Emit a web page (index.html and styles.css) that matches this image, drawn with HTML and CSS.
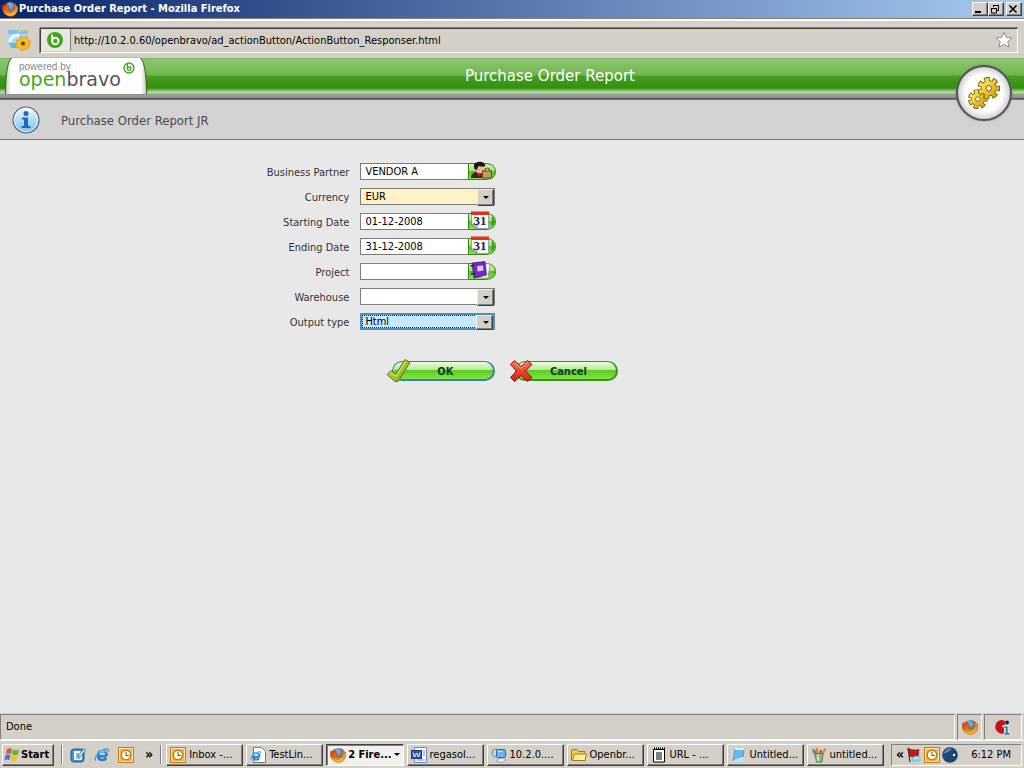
FILE: index.html
```html
<!DOCTYPE html>
<html lang="en">
<head>
  <meta charset="UTF-8" />
  <meta name="viewport" content="width=device-width, initial-scale=1.0"/>
  <title>Purchase Order Report</title>
  <link rel="stylesheet" href="styles.css">
</head>
<body>
  <!-- shared icons -->
  <svg class="defs" aria-hidden="true">
    <defs>
      <linearGradient id="fox" x1="0" y1="0" x2="1" y2="1">
        <stop offset="0" stop-color="#b8330c"/><stop offset=".5" stop-color="#ee7a13"/><stop offset="1" stop-color="#ffc62e"/>
      </linearGradient>
      <radialGradient id="globe" cx=".4" cy=".3" r=".8">
        <stop offset="0" stop-color="#8fc8ef"/><stop offset="1" stop-color="#12327e"/>
      </radialGradient>
      <linearGradient id="gold" x1="0" y1="0" x2="1" y2="1">
        <stop offset="0" stop-color="#ffec5c"/><stop offset="1" stop-color="#d8a00c"/>
      </linearGradient>
      <linearGradient id="pill" x1="0" y1="0" x2="0" y2="1">
        <stop offset="0" stop-color="#d9f7bd"/><stop offset=".45" stop-color="#9be66a"/><stop offset=".5" stop-color="#55bf24"/><stop offset="1" stop-color="#86ea4a"/>
      </linearGradient>
      <linearGradient id="info" x1="0" y1="0" x2="0" y2="1">
        <stop offset="0" stop-color="#f4fbff"/><stop offset=".5" stop-color="#b2dcf8"/><stop offset="1" stop-color="#7dc0f0"/>
      </linearGradient>
      <linearGradient id="check" x1="0" y1="0" x2="1" y2="1">
        <stop offset="0" stop-color="#cbe34e"/><stop offset="1" stop-color="#7ea51c"/>
      </linearGradient>
      <linearGradient id="cross" x1="0" y1="0" x2="0" y2="1">
        <stop offset="0" stop-color="#ff7354"/><stop offset="1" stop-color="#d21f12"/>
      </linearGradient>
    </defs>
    <symbol id="firefox" viewBox="0 0 16 16">
      <circle cx="8.5" cy="7.5" r="6.5" fill="url(#globe)"/>
      <path d="M1 3.5 2 5Q3 2.500 5 2.200L4.600 3.800Q6.500 4 7.600 5.200 6 5.600 6 6.800 7 7.200 8.500 7 7.600 8.600 5.900 8.800 7 11 9.600 10.600 12 10 12.200 7.400L13 8Q13 4 10.500 2 14 2.600 15.200 6L15.800 5Q16.500 11 12.800 13.900 8.500 17 4 14 .2 11.500.3 7Q.3 5 1 3.500Z" fill="url(#fox)" stroke="#a53a08" stroke-width=".4"/>
      <path d="M2.500 11.500Q7 16 12.500 12.300" fill="none" stroke="#ffc83a" stroke-width="1"/>
    </symbol>
    <symbol id="outlook" viewBox="0 0 16 16">
      <rect x=".5" y=".5" width="15" height="15" fill="#fde7b0" stroke="#c8791a"/>
      <rect x="2" y="2" width="12" height="12" fill="#f3b64d"/>
      <circle cx="8" cy="8" r="4.800" fill="#fff8e4" stroke="#c36d0b" stroke-width="1.200"/>
      <path d="M8 4.500V8.500H11" fill="none" stroke="#7c4b0c"/>
    </symbol>
    <symbol id="ie" viewBox="0 0 16 16">
      <path d="M12.500 9.200H5.200M12.700 9Q12.700 4.200 8.500 4 4.200 4.200 4 8.600 4.300 13 8.500 13 11 13 12.200 11" fill="none" stroke="#2381d5" stroke-width="2.600"/>
      <path d="M2 13.500Q-.5 12 4 6.800 9 2 13 2 15.500 2.200 14 5" fill="none" stroke="#3aa0ea" stroke-width="1.300"/>
      <path d="M5 5.500Q8 2.500 11.500 5" fill="none" stroke="#a5dcfb"/>
    </symbol>
    <symbol id="bravo" viewBox="0 0 16 16">
      <circle cx="8" cy="8" r="8" fill="#43a518"/>
      <circle cx="8.300" cy="9" r="3.200" fill="none" stroke="#fff" stroke-width="2"/>
      <path d="M5.100 2.600V9.500" stroke="#fff" stroke-width="2"/>
    </symbol>
    <symbol id="calendar" viewBox="0 0 28 20">
      <path d="M.5 2.500H18Q27.500 3 27.500 10.500T18 18.500H.5Z" fill="url(#pill)" stroke="#2f8a14"/>
      <path d="M24 6Q26.500 10 24 14" fill="none" stroke="#1f8a10" stroke-width="1.500"/>
      <path d="M3.500 1H20.500V17.500H9L3.500 13Z" fill="#fcfcff" stroke="#9d9db2"/>
      <path d="M3 13 9 17.500 9 13.500Z" fill="#bcbccd" stroke="#77778c" stroke-width=".7"/>
      <rect x="3" y="0" width="18" height="4" fill="#d8371d"/>
      <path d="M3 .5H21" stroke="#f28a67"/>
    </symbol>
    <symbol id="gear" viewBox="0 0 24 24">
      <circle cx="12" cy="12" r="9" fill="none" stroke="#75570a" stroke-width="6" stroke-dasharray="5.400 2.678" stroke-dashoffset="2.700"/>
      <circle cx="12" cy="12" r="8.600" fill="#75570a"/>
      <circle cx="12" cy="12" r="8.500" fill="none" stroke="url(#gold)" stroke-width="5" stroke-dasharray="3.600 4.029" stroke-dashoffset="1.800"/>
      <circle cx="12" cy="12" r="7.700" fill="url(#gold)"/>
      <circle cx="12" cy="12" r="2.800" fill="#f5f5f5" stroke="#75570a"/>
    </symbol>
  </svg>

  <div class="titlebar">
    <svg class="icon"><use href="#firefox"/></svg>
    <span class="caption">Purchase Order Report - Mozilla Firefox</span>
    <div class="window-buttons">
      <button type="button" aria-label="Minimize"><svg viewBox="0 0 12 10"><path d="M2 8H8" stroke="#000" stroke-width="2"/></svg></button>
      <button type="button" aria-label="Restore"><svg viewBox="0 0 12 10"><path d="M4.500 3V1.500H9.500V6.500H8M4 1.500H10M2.500 4.500H7.500V9H2.500ZM2 4.500H8" fill="none" stroke="#000"/></svg></button>
      <button type="button" class="close" aria-label="Close"><svg viewBox="0 0 12 10"><path d="M2.500 1.500 9.500 8.500M9.500 1.500 2.500 8.500" stroke="#000" stroke-width="1.600"/></svg></button>
    </div>
  </div>

  <div class="toolbar">
    <svg class="prism" viewBox="0 0 24 24">
      <rect x="1" y="2" width="20" height="15" rx="2" fill="#a9d8f6"/>
      <rect x="1" y="2" width="20" height="4" rx="1" fill="#7fc0ec"/>
      <path d="M12 3H14M16 3H17M19 3H20" stroke="#ffcf3a" stroke-width="2"/>
      <path d="M3 14Q3 8 12 7" stroke="#f3fbff" stroke-width="3" fill="none"/>
      <path d="M2 15H9V20H4Z" fill="#69b7e9"/>
      <path d="M14 8 17 10 20 8 21 12 24 13 22 17 22 20 18 21 15 23 12 20 8 19 10 15 9 12 13 12Z" fill="#f6bd20" stroke="#d8910c" stroke-width=".7"/>
      <circle cx="16" cy="15.500" r="2" fill="#614308"/>
    </svg>
    <div class="address">
      <span class="favicon"><svg><use href="#bravo"/></svg></span>
      <input type="text" aria-label="Address" value="http://10.2.0.60/openbravo/ad_actionButton/ActionButton_Responser.html">
      <svg class="star" viewBox="0 0 18 18"><path d="M9 1.500 11.300 6.300 16.700 7 12.800 10.600 13.800 16 9 13.400 4.200 16 5.200 10.600 1.300 7 6.700 6.300Z" fill="#fff" stroke="#8d8d8d"/></svg>
    </div>
  </div>

  <header class="app-header">
    <div class="logo">
      <span class="powered">powered by</span>
      <span class="brand"><span class="green">open</span>bravo</span>
      <svg class="mark" viewBox="0 0 12 12"><circle cx="6" cy="6" r="5" fill="none" stroke="#43a518" stroke-width="1.400"/><circle cx="6.200" cy="6.800" r="1.800" fill="none" stroke="#43a518" stroke-width="1.300"/><path d="M4.400 2V7" stroke="#43a518" stroke-width="1.300"/></svg>
    </div>
    <h1>Purchase Order Report</h1>
    <div class="process">
      <svg viewBox="0 0 36 36"><use href="#gear" x="1" y="14" width="21" height="21"/><use href="#gear" x="11" y="1" width="24" height="24"/></svg>
    </div>
  </header>

  <div class="info-bar">
    <svg viewBox="0 0 28 28">
      <circle cx="14" cy="14" r="13" fill="url(#info)" stroke="#54606c" stroke-width="1.200"/>
      <circle cx="14" cy="14" r="11.800" fill="none" stroke="#fff" stroke-opacity=".7"/>
      <circle cx="14" cy="7.500" r="2.500" fill="#1b6cb0"/>
      <path d="M10 11.500H16V20H18.500V22H9.500V20H12V13.500H10Z" fill="#1b6cb0"/>
    </svg>
    <h2>Purchase Order Report JR</h2>
  </div>

  <main>
    <form class="report-form">
      <label for="partner">Business Partner</label>
      <div class="field">
        <input type="text" id="partner" value="VENDOR A">
        <button type="button" class="picker" aria-label="Select business partner">
          <svg viewBox="0 0 28 20">
            <path d="M.5 2.500H18Q27.500 3 27.500 10.500T18 18.500H.5Z" fill="url(#pill)" stroke="#2f8a14"/>
            <path d="M3 17Q3 12 8 11H14Q17 12 17 17Z" fill="#4b2023"/>
            <circle cx="12" cy="8" r="4.500" fill="#efb994"/>
            <path d="M6.500 8Q4 2 10 1 16 0 17.500 5 15 6.500 11 5Q9.500 6 9 9Z" fill="#1d1512"/>
            <path d="M9 12 11.500 16 14 12" fill="#cf2222"/>
            <path d="M17 10V8.500Q19.500 5.500 21.500 8.500V10" fill="none" stroke="#6b4a23" stroke-width="1.200"/>
            <rect x="14.500" y="10" width="9" height="7" fill="#c69a5f" stroke="#6b4a23"/>
          </svg>
        </button>
      </div>

      <label for="currency">Currency</label>
      <div class="field select required">
        <select id="currency"><option>EUR</option></select>
      </div>

      <label for="from">Starting Date</label>
      <div class="field">
        <input type="text" id="from" value="01-12-2008">
        <button type="button" class="picker" aria-label="Pick starting date"><svg viewBox="0 0 28 20"><use href="#calendar"/><text x="12" y="14" class="cal-day">31</text></svg></button>
      </div>

      <label for="to">Ending Date</label>
      <div class="field">
        <input type="text" id="to" value="31-12-2008">
        <button type="button" class="picker" aria-label="Pick ending date"><svg viewBox="0 0 28 20"><use href="#calendar"/><text x="12" y="14" class="cal-day">31</text></svg></button>
      </div>

      <label for="project">Project</label>
      <div class="field">
        <input type="text" id="project">
        <button type="button" class="picker" aria-label="Select project">
          <svg viewBox="0 0 28 20">
            <path d="M.5 2.500H18Q27.500 3 27.500 10.500T18 18.500H.5Z" fill="url(#pill)" stroke="#2f8a14"/>
            <path d="M12 2 22 3 20 17 12 17Z" fill="#f8f5ff" stroke="#8f86a5" stroke-width=".7"/>
            <path d="M4 2 17 0.500 18.500 14 6 17Z" fill="#7428bc" stroke="#3d1273" stroke-width=".7"/>
            <path d="M9 5 15 4.500 15.500 9.500 9.500 10.500Z" fill="#dcc3f2"/>
            <path d="M2.500 5 6 4.500M3 13 7 12.500" stroke="#2b1647" stroke-width="1.500"/>
          </svg>
        </button>
      </div>

      <label for="warehouse">Warehouse</label>
      <div class="field select">
        <select id="warehouse"><option></option></select>
      </div>

      <label for="output">Output type</label>
      <div class="field select focused">
        <select id="output"><option>Html</option><option>PDF</option></select>
      </div>

      <div class="actions">
        <button type="submit" class="action ok">
          <svg viewBox="0 0 26 26"><path d="M1 16.500 5 12.500 9.500 16.500 19 1.500 24 4.500 12 23.500H9Z" fill="url(#check)" stroke="#5b7010" stroke-linejoin="round"/><path d="M5 14.500 10 18.500 19.500 3.500" fill="none" stroke="#dcee7c"/></svg>
          <span>OK</span>
        </button>
        <button type="button" class="action">
          <svg viewBox="0 0 26 26"><path d="M5.500 2.500 12 8.500 18.500 2.500 23 6.500 16.500 13 23 19.500 18.500 23.500 12 17.500 5.500 23.500 1.500 19.500 7.500 13 1.500 6.500Z" fill="url(#cross)" stroke="#831510" stroke-linejoin="round"/><path d="M5.500 4.500 12 10.500 18.500 4.500" fill="none" stroke="#ff9d84"/></svg>
          <span>Cancel</span>
        </button>
      </div>
    </form>
  </main>

  <div class="statusbar">
    <div class="panel message">Done</div>
    <div class="panel"><svg class="icon"><use href="#firefox"/></svg></div>
    <div class="panel wide">
      <svg class="icon" viewBox="0 0 16 16"><path d="M9.500 1.500Q5 0 2 3-1 7 1 11 4 15.500 9 14.500V8H7V6H10Z" fill="#c8101c"/><path d="M9 7H13V13.500H15V16H9V13.500H10.500V9.500H9Z" fill="#3c7ba5" stroke="#fff" stroke-width=".6"/><circle cx="12" cy="3.500" r="2" fill="#1c2732"/></svg>
    </div>
  </div>

  <footer class="taskbar">
    <button type="button" class="start">
      <svg viewBox="0 0 18 16"><path d="M4 2Q7 .5 9 2L8 7Q6 6 3 7Z" fill="#e5562c"/><path d="M10 2.500Q13 4 16 2.500L15 7.500Q12 9 9 7.500Z" fill="#5fb536"/><path d="M2.500 8Q5.500 7 7.500 8L6.500 13Q4 12 1.500 13Z" fill="#3d7be0"/><path d="M8.700 8.600Q11.500 10 14.600 8.700L13.600 13.600Q11 15 7.700 13.600Z" fill="#f4c11f"/></svg>
      Start
    </button>
    <span class="divider"></span>
    <div class="quick">
      <svg class="icon" viewBox="0 0 16 16"><rect x="1" y="2" width="13" height="13" rx="3" fill="#3b92d4" stroke="#175d9b"/><path d="M4 4H10L12 6V13H4Z" fill="#fff"/><path d="M6 7H9M6 9H9M6 11H10" stroke="#2372b0"/><path d="M8 9 14 1.500 15.500 3 10 10Z" fill="#eef8ff" stroke="#175d9b" stroke-width=".8"/></svg>
      <svg class="icon"><use href="#ie"/></svg>
      <svg class="icon"><use href="#outlook"/></svg>
    </div>
    <span class="more">»</span>
    <span class="divider"></span>
    <div class="tasks">
      <button type="button"><svg class="icon"><use href="#outlook"/></svg>Inbox -...</button>
      <button type="button"><svg class="icon" viewBox="0 0 16 16"><path d="M3.500.5H11.500L15.500 4.500V15.500H3.500Z" fill="#fff" stroke="#777"/><use href="#ie" x="0" y="3" width="12" height="12"/></svg>TestLin...</button>
      <button type="button" class="active"><svg class="icon"><use href="#firefox"/></svg>2 Fire...<span class="caret"></span></button>
      <button type="button"><svg class="icon" viewBox="0 0 16 16"><path d="M3.500.5H15.500V15.500H3.500Z" fill="#fff" stroke="#6d87c4"/><path d="M12 4H14M12 6H14M12 8H14M6 13H14" stroke="#6d87c4"/><rect x=".5" y="3.500" width="10" height="8" fill="#2b57b5" stroke="#173b8a"/><path d="M2 5.500 3.500 10 5.500 6 7.500 10 9 5.500" fill="none" stroke="#fff"/></svg>regasol...</button>
      <button type="button"><svg class="icon" viewBox="0 0 16 16"><circle cx="5" cy="6" r="4" fill="#c7d5e3" stroke="#7890a7"/><rect x="5.500" y="2.500" width="9" height="8" rx="1" fill="#6ab5ef" stroke="#2c68a8"/><path d="M7 4.500H11" stroke="#d4f0ff"/><path d="M7 12 12 11 15 13 11 15.500 5 14Z" fill="#e6eef5" stroke="#7890a7" stroke-width=".7"/></svg>10.2.0....</button>
      <button type="button"><svg class="icon" viewBox="0 0 16 16"><path d="M.5 13V3.500Q.5 2.500 1.500 2.500H6L7.500 4.500H14V13.500H1.500Z" fill="#f2c94b" stroke="#a77d16"/><path d="M1.500 13.500 3.500 7H15.500L14 13.500Z" fill="#fff09b" stroke="#a77d16"/></svg>Openbr...</button>
      <button type="button"><svg class="icon" viewBox="0 0 16 16"><path d="M2.500 2.500H13.500V15H2.500Z" fill="#fff" stroke="#000"/><path d="M3 1.500H14" stroke="#000" stroke-width="2" stroke-dasharray="1 1"/><path d="M5 6H11M5 8H11M5 10H11M5 12H11" stroke="#000"/></svg>URL - ...</button>
      <button type="button"><svg class="icon" viewBox="0 0 16 16"><path d="M4 1.500H13L12 14H2Z" fill="#68b9e9" stroke="#3e8cbd" stroke-width=".7"/><path d="M4 2H13" stroke="#d3eef9" stroke-width="2"/><path d="M8 11 14 9.500 13 15H2L3 13Z" fill="#b7e3f6"/></svg>Untitled...</button>
      <button type="button"><svg class="icon" viewBox="0 0 16 16"><path d="M4 8 1.500 2M7 8 5.500 1M11 8 14.500 1.500" stroke="#d28824" stroke-width="2"/><path d="M9 8 10 3" stroke="#c33b2a" stroke-width="2"/><path d="M6 8 3 3" stroke="#3a75c5" stroke-width="1.500"/><path d="M4 6.500H12L11 15H5.500Z" fill="#8fb78c" stroke="#5d7b5c"/><path d="M7 8V14" stroke="#e3f3df" stroke-width="1.500"/></svg>untitled...</button>
    </div>
    <div class="tray">
      <span class="more">«</span>
      <svg class="icon" viewBox="0 0 16 16"><path d="M2 1 4 15" stroke="#333" stroke-width="1.200"/><path d="M2 1Q6 4 13 2.500L12 10Q7 11 3.500 9Z" fill="#c51818" stroke="#7c0c0c" stroke-width=".6"/><path d="M6 12Q6 9 10 9 15 9 15 12 15 15 10 15H6Z" fill="#7fcbea"/><path d="M8 12.500 11 10.500 13 12" fill="none" stroke="#fff"/></svg>
      <svg class="icon"><use href="#outlook"/></svg>
      <svg class="icon" viewBox="0 0 16 16"><circle cx="8" cy="8" r="7.800" fill="#1d4677"/><path d="M1.500 6Q5 0 10 2 7 5 1.500 7Z" fill="#5c86b0"/><circle cx="12" cy="8" r="1.200" fill="#fff"/></svg>
      <span class="clock">6:12 PM</span>
    </div>
  </footer>
</body>
</html>
```
FILE: styles.css
```css
* {
  box-sizing: border-box;
}

body {
  margin: 0;
  min-height: 100vh;
  display: flex;
  flex-direction: column;
  background: #e8e8e8;
  color: #000;
  font-family: Tahoma, "DejaVu Sans Condensed", "Noto Sans", sans-serif;
  font-size: 11px;
  line-height: 14px;
}

button, input, select {
  margin: 0;
  padding: 0;
  font: inherit;
  color: inherit;
}

svg {
  display: block;
  flex: none;
}

.defs {
  position: absolute;
  width: 0;
  height: 0;
}

.icon {
  width: 16px;
  height: 16px;
}

/* window chrome */
.titlebar {
  display: flex;
  align-items: center;
  height: 18px;
  padding: 0 2px;
  background: linear-gradient(to right, #0a246a, #a6caf0);
}

.caption {
  flex: 1;
  padding-left: 1px;
  color: #fff;
  font-weight: bold;
}

.window-buttons {
  display: flex;
}

.window-buttons button {
  width: 16px;
  height: 14px;
  background: #d4d0c8;
  border: 1px solid;
  border-color: #fff #404040 #404040 #fff;
  box-shadow: inset -1px -1px #808080;
}

.window-buttons svg {
  width: 12px;
  height: 10px;
}

.window-buttons .close {
  margin-left: 2px;
}

.toolbar {
  display: flex;
  align-items: center;
  gap: 9px;
  height: 40px;
  padding: 3px 6px 0 7px;
  background: #d4d0c8;
  border-top: 1px solid #808080;
  box-shadow: inset 0 2px #fff;
}

.prism {
  width: 24px;
  height: 24px;
}

.address {
  flex: 1;
  display: flex;
  align-items: center;
  height: 25px;
  padding-right: 4px;
  border: 1px solid;
  border-color: #404040 #fff #fff #404040;
  box-shadow: 0 -1px #808080, -1px 0 #808080;
}

.favicon {
  padding: 3px 7px 3px 6px;
  background: #e8e6e1;
  border-right: 1px solid #808080;
}

.favicon svg {
  width: 16px;
  height: 16px;
}

.address input {
  flex: 1;
  padding: 2px 0 0 3px;
  background: none;
  border: 0;
  outline: none;
}

.star {
  width: 18px;
  height: 18px;
}

/* application header */
.app-header {
  position: relative;
  display: flex;
  height: 42px;
  padding: 0 70px 0 6px;
  background: linear-gradient(to bottom, #7d9f66 0, #8cc66c 1px, #72b552 17px, #44a01e 18px, #338f0c 30px, #8fcb74 33px, #c3dfb5 35px, #9b9b9b 36px, #9b9b9b 39px, #4c4c4c 41px, #8f8f8f 42px);
}

.logo {
  position: relative;
  width: 140px;
  height: 36px;
  padding: 3px 0 0 13px;
  background: linear-gradient(to right, #c8c8c8, #fff 5px, #fff 135px, #c8c8c8);
  border-radius: 7px 7px 0 0 / 34px 34px 0 0;
  box-shadow: 1px 0 1px #2c6b14, -1px 0 1px #2c6b14;
}

.powered {
  display: block;
  color: #8a8a8a;
  font-family: "Liberation Sans", sans-serif;
  font-size: 10px;
  line-height: 12px;
}

.brand {
  display: block;
  color: #555;
  font-family: "DejaVu Sans", sans-serif;
  font-size: 19px;
  line-height: 12px;
}

.green {
  color: #43a518;
}

.mark {
  position: absolute;
  top: 4px;
  right: 11px;
  width: 12px;
  height: 12px;
}

.app-header h1 {
  flex: 1;
  margin: 0;
  color: #fff;
  font-family: Tahoma, "DejaVu Sans", sans-serif;
  font-size: 15px;
  font-weight: normal;
  line-height: 37px;
  text-align: center;
}

.process {
  position: absolute;
  top: 7px;
  right: 12px;
  width: 56px;
  height: 56px;
  padding: 9px;
  background: radial-gradient(circle, #fff 50%, #d9d9d9 68%, #b5b5b5 72%);
  border: 2px solid #555;
  border-radius: 50%;
  box-shadow: 0 0 2px #777;
}

.process svg {
  width: 34px;
  height: 34px;
}

.info-bar {
  display: flex;
  align-items: center;
  gap: 21px;
  height: 40px;
  padding-left: 12px;
  background: #d2d2d2;
  border-bottom: 1px solid #4b9a3b;
}

.info-bar svg {
  width: 28px;
  height: 28px;
}

.info-bar h2 {
  margin: 0;
  padding-top: 2px;
  color: #4a4a4a;
  font-size: 13px;
  font-weight: normal;
}

/* report parameters */
main {
  flex: 1;
}

.report-form {
  display: grid;
  grid-template-columns: 35% 136px;
  grid-auto-rows: 17px;
  gap: 8px 2px;
  align-items: center;
  padding-top: 23px;
}

.report-form label {
  padding: 2px 9px 0 0;
  color: #333;
  text-align: right;
}

.field {
  position: relative;
  display: flex;
  height: 17px;
}

.field input {
  width: 110px;
  padding: 1px 4px 0;
  background: #fff;
  border: 1px solid #7d7d7d;
  outline: none;
}

.picker {
  width: 28px;
  height: 20px;
  margin: -2px 0 0 -2px;
  background: none;
  border: 0;
}

.picker svg {
  width: 28px;
  height: 20px;
}

.cal-day {
  fill: #26263a;
  font-family: "Liberation Serif", serif;
  font-size: 13px;
  font-weight: bold;
  text-anchor: middle;
}

.select {
  width: 135px;
}

.select select {
  width: 100%;
  padding: 1px 20px 0 4px;
  appearance: none;
  background: #fff;
  border: 1px solid #7d7d7d;
  border-radius: 0;
  outline: none;
}

.select::before {
  content: "";
  position: absolute;
  top: 1px;
  right: 1px;
  width: 15px;
  height: 15px;
  background: #d4d0c8;
  border: 1px solid;
  border-color: #eee #404040 #404040 #eee;
  box-shadow: inset -1px -1px #808080;
  pointer-events: none;
}

.select::after {
  content: "";
  position: absolute;
  top: 8px;
  right: 6px;
  border: 3px solid transparent;
  border-top-color: #000;
  border-bottom: 0;
  pointer-events: none;
}

.required select {
  background: #fff2c4;
}

.focused select {
  background: #c7e8ff;
  border: 2px solid #4a8fc2;
  padding: 0 20px 0 3px;
  outline: 1px dotted #222;
  outline-offset: -3px;
}

.focused::before {
  top: 2px;
  right: 2px;
  height: 13px;
}

.actions {
  grid-column: 2;
  align-self: start;
  display: flex;
  gap: 14px;
  width: 260px;
  margin: 20px 0 0 26px;
}

.action {
  position: relative;
  width: 109px;
  height: 26px;
  padding: 0 0 0 6px;
  background: none;
  border: 0;
  color: #0e3c22;
  font-weight: bold;
}

.action svg {
  position: absolute;
  top: 0;
  left: 0;
  width: 26px;
  height: 26px;
}

.action span {
  display: block;
  height: 20px;
  padding-left: 4px;
  line-height: 19px;
  background: linear-gradient(to bottom, #eefbe4, #b4ec90 45%, #5fc92b 50%, #7fe83c);
  border: 1px solid #3f8f24;
  border-right-width: 2px;
  border-bottom-width: 2px;
  border-radius: 10px;
}

.ok span {
  border-color: #3f7ca8;
}

/* status bar */
.statusbar {
  display: flex;
  gap: 2px;
  height: 27px;
  padding: 1px 2px 0 0;
  background: #d4d0c8;
}

.panel {
  display: flex;
  align-items: center;
  justify-content: center;
  width: 25px;
  border: 1px solid;
  border-color: #808080 #fff #fff #808080;
}

.message {
  flex: 1;
  justify-content: flex-start;
  padding-left: 5px;
}

.wide {
  width: 38px;
}

/* taskbar */
.taskbar {
  display: flex;
  align-items: center;
  height: 28px;
  padding: 0 2px;
  background: #d4d0c8;
  border-top: 1px solid #fff;
}

.taskbar button {
  display: flex;
  align-items: center;
  height: 22px;
  background: #d4d0c8;
  border: 1px solid;
  border-color: #fff #404040 #404040 #fff;
  box-shadow: inset -1px -1px #808080;
  white-space: nowrap;
}

.taskbar .start {
  width: 52px;
  font-weight: bold;
}

.start svg {
  width: 18px;
  height: 16px;
}

.divider {
  width: 2px;
  height: 19px;
  margin: 0 4px 0 7px;
  border-left: 1px solid #808080;
  border-right: 1px solid #fff;
}

.quick {
  display: flex;
  gap: 8px;
  padding: 0 11px 0 3px;
}

.more {
  padding-bottom: 2px;
  font-size: 14px;
  font-weight: bold;
  line-height: 12px;
}

.tasks {
  flex: 1;
  display: flex;
  gap: 3px;
}

.tasks button {
  flex: 0 1 77px;
  gap: 3px;
  padding: 0 3px;
}

.tasks .active {
  gap: 2px;
  background: #f2f0ec;
  border-color: #404040 #fff #fff #404040;
  box-shadow: inset 1px 1px #808080;
  font-weight: bold;
}

.caret {
  border: 3px solid transparent;
  border-top-color: #000;
  border-bottom: 0;
}

.tray {
  display: flex;
  align-items: center;
  gap: 2px;
  width: 131px;
  height: 22px;
  padding: 0 10px 0 4px;
  border: 1px solid;
  border-color: #808080 #fff #fff #808080;
}

.clock {
  flex: 1;
  text-align: right;
  white-space: nowrap;
}
```
